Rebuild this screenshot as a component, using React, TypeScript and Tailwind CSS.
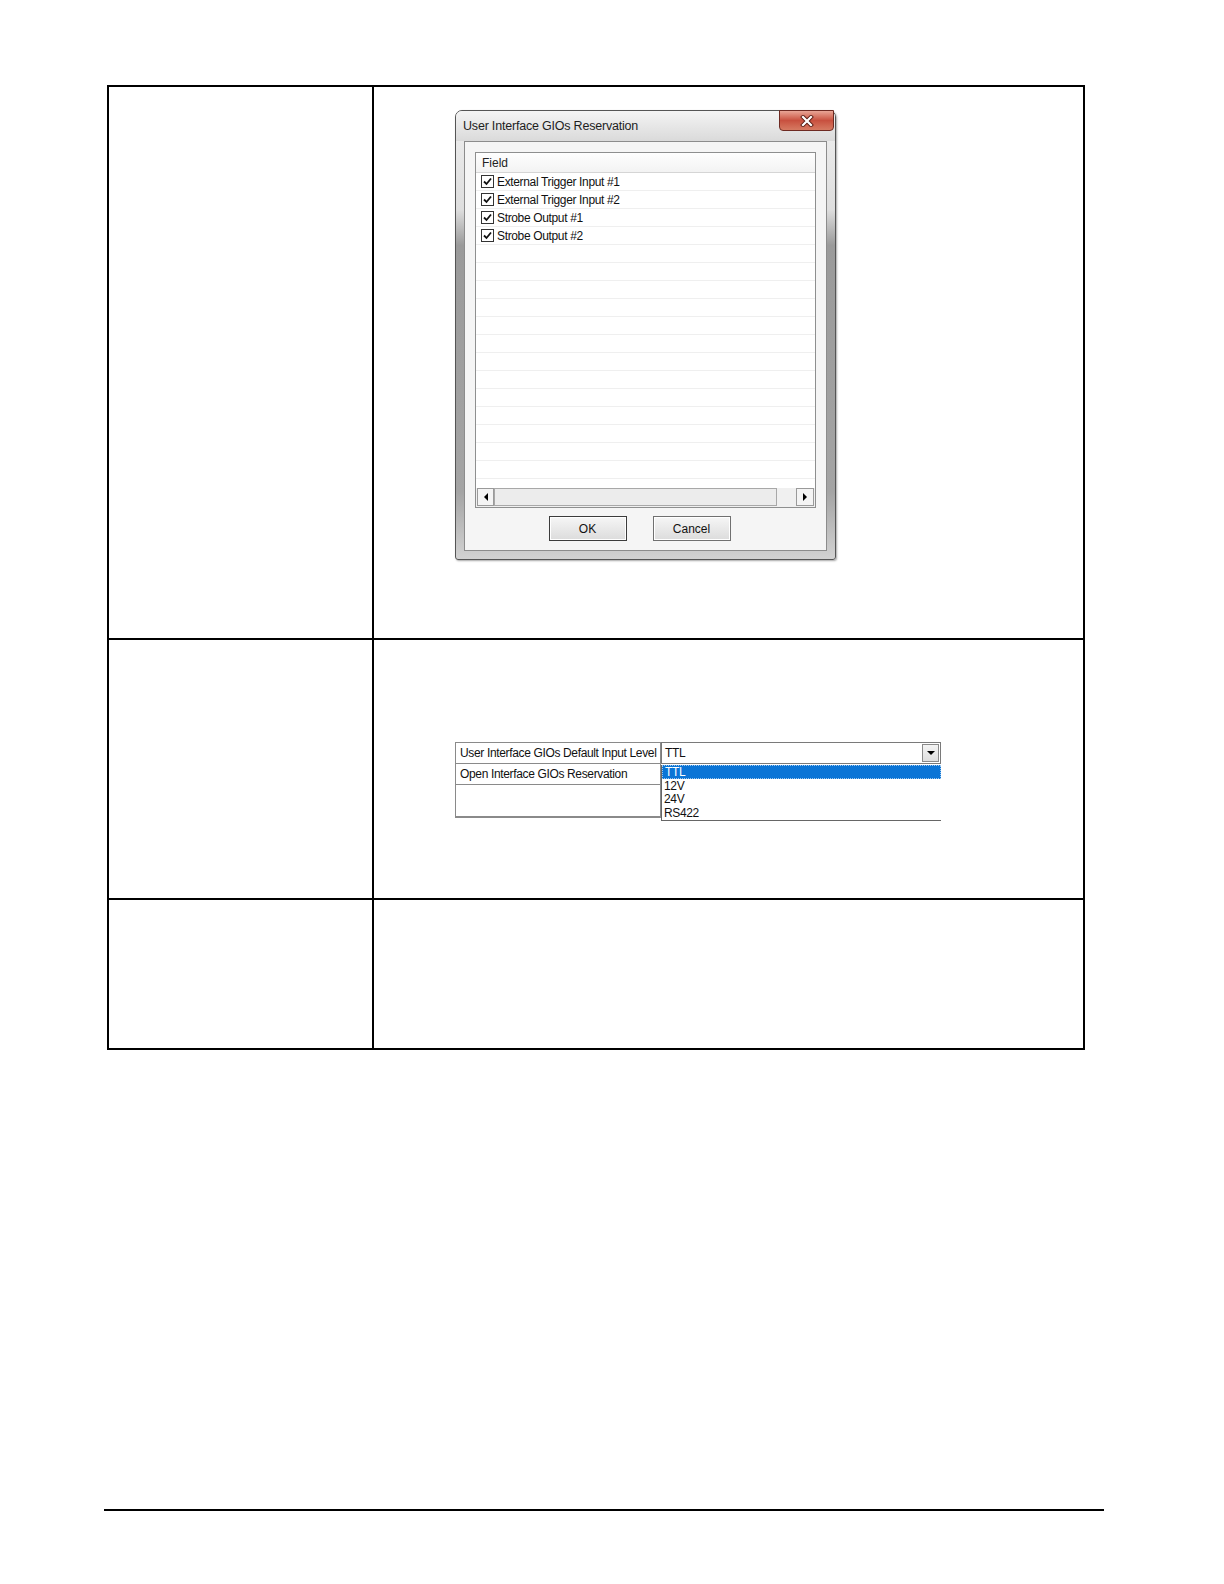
import React from "react";

const FIELDS = [
  "External Trigger Input #1",
  "External Trigger Input #2",
  "Strobe Output #1",
  "Strobe Output #2",
];

const LEVELS = ["TTL", "12V", "24V", "RS422"];

function CheckBox() {
  return (
    <span className="w-[13px] h-[13px] border border-[#333] bg-white flex items-center justify-center shrink-0">
      <svg width="9" height="9" viewBox="0 0 9 9">
        <path d="M1 4.5 L3.5 7 L8 1.5" fill="none" stroke="#111" strokeWidth="1.8" />
      </svg>
    </span>
  );
}

function ReservationDialog() {
  const rows = Array.from({ length: 17 }, (_, i) => FIELDS[i]);
  return (
    <div className="w-[381px] h-[450px] rounded-t-[7px] rounded-b-[3px] border border-[#555] bg-[linear-gradient(to_bottom,#efefef_0%,#dedede_22%,#9a9a9a_30%,#a4a4a4_85%,#d2d2d2_100%)] flex flex-col shadow-[1px_1px_2px_rgba(0,0,0,0.35)]">
      <div className="h-[30px] relative flex items-center pl-[7px] shrink-0 rounded-t-[6px] bg-gradient-to-b from-[#f4f4f4] to-[#dadada]">
        <span className="text-[12.5px] text-[#1e1e1e] tracking-[-0.2px]">User Interface GIOs Reservation</span>
        <div className="absolute right-[1px] -top-px w-[55px] h-[21px] rounded-b-[4px] border border-[#6e2a22] bg-gradient-to-b from-[#e8a596] via-[#c8503f] to-[#d67a62] flex items-center justify-center">
          <svg width="14" height="12" viewBox="0 0 14 12">
            <path d="M3 2 L11 10 M11 2 L3 10" stroke="#5a1d14" strokeWidth="4" strokeLinecap="square" />
            <path d="M3 2 L11 10 M11 2 L3 10" stroke="#fff" strokeWidth="2.2" strokeLinecap="square" />
          </svg>
        </div>
      </div>
      <div className="flex-1 mx-[8px] mb-[8px] border border-[#8c8c8c] bg-[#f5f5f5] flex flex-col px-[10px] pt-[10px]">
        <div className="h-[356px] border border-[#8e8f8f] bg-white flex flex-col">
          <div className="h-[20px] border-b border-[#d5d5d5] bg-gradient-to-b from-[#fefefe] to-[#f3f3f3] flex items-center pl-[6px] shrink-0 text-[12px] text-[#222]">
            Field
          </div>
          <div className="flex-1 overflow-hidden">
            {rows.map((f, i) => (
              <div key={i} className="h-[18px] border-b border-[#efefef] flex items-center pl-[5px] gap-[3px] text-[12px] text-[#111] tracking-[-0.35px]">
                {f && (
                  <>
                    <CheckBox />
                    <span>{f}</span>
                  </>
                )}
              </div>
            ))}
          </div>
          <div className="h-[19px] flex items-stretch bg-[#f0f0f0] shrink-0 px-px pb-px">
            <div className="w-[17px] border border-[#9a9a9a] bg-[#f4f4f4] flex items-center justify-center">
              <span className="w-0 h-0 border-y-[4px] border-y-transparent border-r-[4px] border-r-black" />
            </div>
            <div className="w-[283px] border border-[#a8a8a8] bg-[#ececec]" />
            <div className="flex-1" />
            <div className="w-[18px] border border-[#9a9a9a] bg-[#f4f4f4] flex items-center justify-center">
              <span className="w-0 h-0 border-y-[4px] border-y-transparent border-l-[4px] border-l-black" />
            </div>
          </div>
        </div>
        <div className="flex justify-center gap-[26px] mt-[8px] pr-[12px]">
          <button className="w-[78px] h-[25px] border border-[#3c3c3c] bg-gradient-to-b from-[#f6f6f6] to-[#dcdcdc] text-[12px] text-[#111] shadow-[inset_0_0_0_1px_#fff]">
            OK
          </button>
          <button className="w-[78px] h-[25px] border border-[#707070] bg-gradient-to-b from-[#f6f6f6] to-[#dcdcdc] text-[12px] text-[#111] shadow-[inset_0_0_0_1px_#fff]">
            Cancel
          </button>
        </div>
      </div>
    </div>
  );
}

function PropertyGrid() {
  return (
    <div className="flex text-[12px] text-[#111] tracking-[-0.35px] leading-none">
      <div className="w-[206px] flex flex-col">
        <div className="h-[22px] border border-[#8a8a8a] flex items-center pl-[4px]">
          User Interface GIOs Default Input Level
        </div>
        <div className="h-[21px] border-x border-b border-[#8a8a8a] flex items-center pl-[4px]">
          Open Interface GIOs Reservation
        </div>
        <div className="h-[33px] border-x border-b-2 border-[#8a8a8a]" />
      </div>
      <div className="w-[280px] flex flex-col">
        <div className="h-[22px] border border-[#7a7a7a] flex items-center justify-between pl-[3px] pr-px bg-white">
          <span>TTL</span>
          <span className="w-[17px] h-[18px] border border-[#8a8a8a] bg-gradient-to-b from-[#f4f4f4] to-[#dedede] flex items-center justify-center">
            <span className="w-0 h-0 border-x-[4px] border-x-transparent border-t-[4px] border-t-black" />
          </span>
        </div>
        <div className="mt-px border-l border-b border-[#666] flex flex-col">
          {LEVELS.map((l, i) => (
            <div
              key={l}
              className={
                i === 0
                  ? "h-[14px] bg-[#0a74d6] text-white pl-[2px] flex items-center border border-dotted border-[#9cc7ee]"
                  : "h-[13.5px] pl-[2px] flex items-center"
              }
            >
              {l}
            </div>
          ))}
        </div>
      </div>
    </div>
  );
}

export default function App() {
  return (
    <div className="w-[1224px] h-[1584px] bg-white relative font-['Liberation_Sans',Arial,sans-serif]">
      <div className="pt-[85px] pl-[107px]">
        <div className="w-[978px] border-2 border-black flex flex-col">
          <div className="h-[553px] flex border-b-2 border-black">
            <div className="w-[265px] border-r-2 border-black" />
            <div className="flex-1 pl-[81px] pt-[23px]">
              <ReservationDialog />
            </div>
          </div>
          <div className="h-[260px] flex border-b-2 border-black">
            <div className="w-[265px] border-r-2 border-black" />
            <div className="flex-1 pl-[81px] pt-[102px]">
              <PropertyGrid />
            </div>
          </div>
          <div className="h-[148px] flex">
            <div className="w-[265px] border-r-2 border-black" />
            <div className="flex-1" />
          </div>
        </div>
      </div>
      <div className="absolute left-[104px] top-[1509px] w-[1000px] h-[2px] bg-black" />
    </div>
  );
}
